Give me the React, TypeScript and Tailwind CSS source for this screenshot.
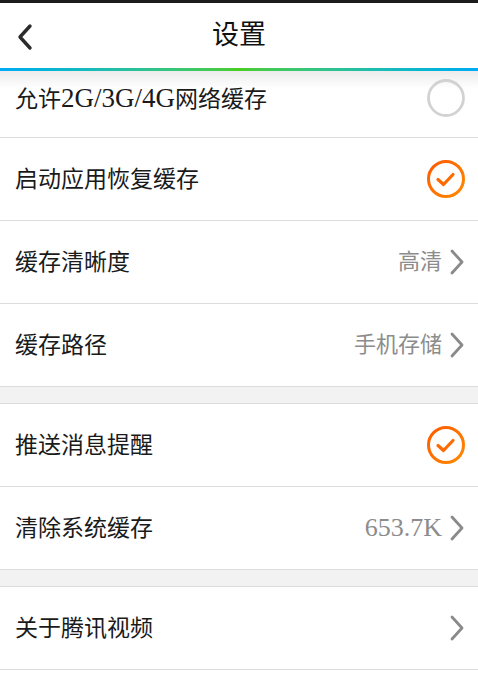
import React from "react";

const Chevron = () => (
  <svg width="18" height="26" viewBox="0 0 18 26" className="ml-[6px]">
    <polyline points="4,2 14,13 4,24" fill="none" stroke="#8a8a8a" strokeWidth="2.8" strokeLinecap="round" strokeLinejoin="round" />
  </svg>
);

const Checked = () => (
  <svg width="40" height="40" viewBox="0 0 40 40">
    <defs>
      <linearGradient id="og" x1="0" y1="0" x2="1" y2="1">
        <stop offset="0" stopColor="#ff5a00" />
        <stop offset="1" stopColor="#ff8a00" />
      </linearGradient>
    </defs>
    <circle cx="20" cy="20" r="17.5" fill="none" stroke="url(#og)" strokeWidth="3" />
    <polyline points="12,20.5 17.5,25.5 27,15.5" fill="none" stroke="#ff6a00" strokeWidth="3.2" strokeLinecap="round" strokeLinejoin="round" />
  </svg>
);

const Unchecked = () => (
  <svg width="40" height="40" viewBox="0 0 40 40">
    <circle cx="20" cy="20" r="17.5" fill="none" stroke="#d2d2d2" strokeWidth="2.8" />
  </svg>
);

type RowProps = { label: React.ReactNode; right?: React.ReactNode; className?: string };

const Row = ({ label, right, className }: RowProps) => (
  <div className={"flex items-center justify-between border-b border-[#dcdcdc] pl-[15px] pr-[12px] " + (className ?? "h-[83px]")}>
    <span className="text-[23px] text-[#1a1a1a] leading-none">{label}</span>
    <div className="flex items-center">{right}</div>
  </div>
);

const Value = ({ text }: { text: string }) => (
  <span className="text-[22px] text-[#8c8c8c] leading-none">{text}</span>
);

const Gap = () => <div className="h-[17px] bg-[#f2f2f2] border-b border-[#dcdcdc]" />;

export default function App() {
  return (
    <div className="w-[478px] h-[673px] overflow-hidden bg-white font-['Liberation_Serif','Noto_Sans_CJK_SC',serif]">
      <div className="h-[3px] bg-[#1c1c1c]" />
      <div className="h-[65px] relative flex items-center justify-center bg-white">
        <svg width="20" height="30" viewBox="0 0 20 30" className="absolute left-[15px] top-[20px]">
          <polyline points="15,3 5,14 15,25" fill="none" stroke="#2b2b2b" strokeWidth="3.4" strokeLinecap="round" strokeLinejoin="round" />
        </svg>
        <span className="text-[27px] text-[#111] leading-none">设置</span>
      </div>
      <div className="h-[3px] bg-gradient-to-r from-[#00aaf5] via-[#4ccc20] to-[#00aaf5]" />
      <div className="bg-[linear-gradient(#ececec,#ffffff_18px)]">
        <Row
          label={<>允许<span className="text-[27px]">2G/3G/4G</span>网络缓存</>}
          right={<Unchecked />}
          className="h-[67px] pb-[12px]"
        />
      </div>
      <Row label="启动应用恢复缓存" right={<Checked />} />
      <Row label="缓存清晰度" right={<><Value text="高清" /><Chevron /></>} />
      <Row label="缓存路径" right={<><Value text="手机存储" /><Chevron /></>} />
      <Gap />
      <Row label="推送消息提醒" right={<Checked />} />
      <Row
        label="清除系统缓存"
        right={<><span className="text-[26px] text-[#8c8c8c] leading-none">653.7K</span><Chevron /></>}
      />
      <Gap />
      <Row label="关于腾讯视频" right={<Chevron />} />
    </div>
  );
}
